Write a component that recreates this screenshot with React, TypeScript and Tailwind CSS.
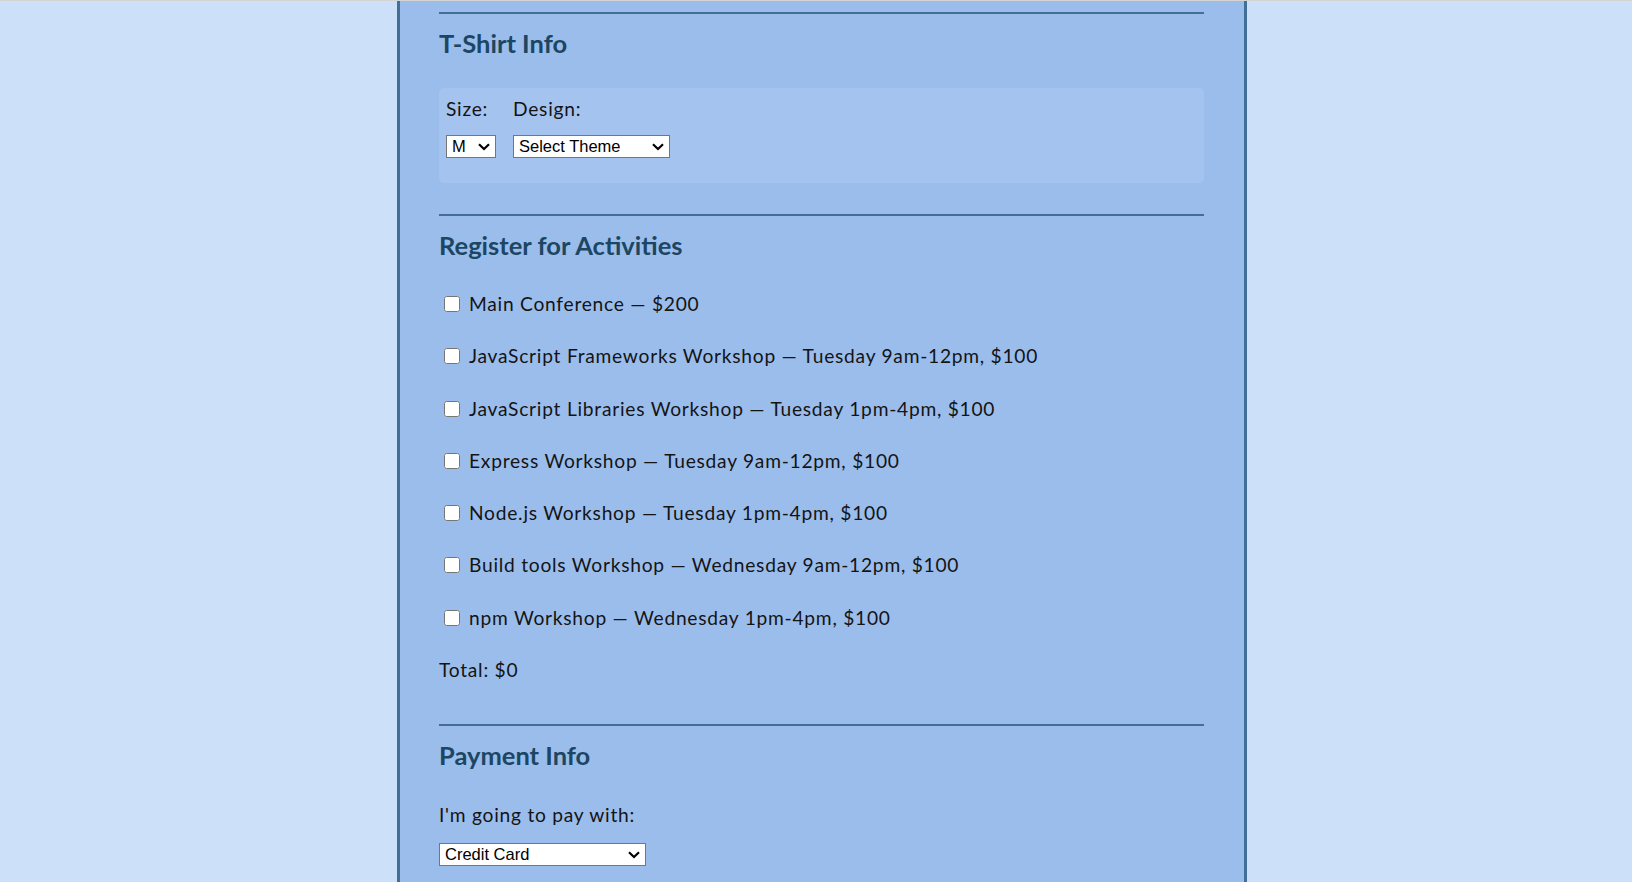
import { useState } from 'react';

const activities = [
  'Main Conference — $200',
  'JavaScript Frameworks Workshop — Tuesday 9am-12pm, $100',
  'JavaScript Libraries Workshop — Tuesday 1pm-4pm, $100',
  'Express Workshop — Tuesday 9am-12pm, $100',
  'Node.js Workshop — Tuesday 1pm-4pm, $100',
  'Build tools Workshop — Wednesday 9am-12pm, $100',
  'npm Workshop — Wednesday 1pm-4pm, $100',
];

function Chevron() {
  return (
    <svg width="12" height="8" viewBox="0 0 12 8" className="pointer-events-none absolute right-[6px] top-[8px]">
      <path d="M1 1.2 L6 6 L11 1.2" fill="none" stroke="#000" strokeWidth="2.2" />
    </svg>
  );
}

function Select({ value, options, width }: { value: string; options: string[]; width: string }) {
  return (
    <div className={`relative ${width}`}>
      <select
        defaultValue={value}
        className="block h-[23px] w-full appearance-none rounded-none border border-[#767676] bg-white pl-[5px] text-[16.5px] leading-[21px] tracking-normal text-black"
        style={{ fontFamily: '"Liberation Sans", Arial, sans-serif' }}
      >
        {options.map((o) => (
          <option key={o}>{o}</option>
        ))}
      </select>
      <Chevron />
    </div>
  );
}

export default function App() {
  const [checked, setChecked] = useState<boolean[]>(activities.map(() => false));

  const total = checked.reduce((sum, c, i) => sum + (c ? (i === 0 ? 200 : 100) : 0), 0);

  return (
    <div
      className="min-h-screen border-t border-[#d4d4d4] bg-[#cde0fa] pl-[12px] text-[19.2px] tracking-[0.75px] text-[#141414]"
      style={{ fontFamily: 'Lato, "Noto Sans", sans-serif' }}
    >
      <main className="mx-auto min-h-[881px] w-[850px] border-x-[3px] border-[#426f96] bg-[#9bbdec] pl-[39px] pr-[40px] pt-[11px]">
        {/* T-Shirt */}
        <section className="border-t-2 border-[#426f96]">
          <h2 className="mt-[13px] text-[25.5px] leading-[32px] font-bold tracking-normal text-[#1c4662]">T-Shirt Info</h2>
          <div className="mt-[29px] flex h-[95px] gap-[17px] rounded-[5px] bg-[#a4c4ef] px-[7px] pt-[8px]">
            <div>
              <label className="block leading-[26px]">Size:</label>
              <div className="mt-[13px]">
                <Select value="M" options={['S', 'M', 'L', 'XL']} width="w-[50px]" />
              </div>
            </div>
            <div>
              <label className="block leading-[26px]">Design:</label>
              <div className="mt-[13px]">
                <Select
                  value="Select Theme"
                  options={['Select Theme', 'Theme - JS Puns', 'Theme - I ♥ JS']}
                  width="w-[157px]"
                />
              </div>
            </div>
          </div>
        </section>

        {/* Activities */}
        <section className="mt-[31px] border-t-2 border-[#426f96]">
          <h2 className="mt-[13px] text-[25.5px] leading-[32px] font-bold tracking-normal text-[#1c4662]">Register for Activities</h2>
          <div className="mt-[31px]">
            {activities.map((a, i) => (
              <label key={a} className="flex h-[52.3px] items-start gap-[9px] pl-[5px]">
                <input
                  type="checkbox"
                  checked={checked[i]}
                  onChange={() => setChecked((prev) => prev.map((c, j) => (j === i ? !c : c)))}
                  className="mt-[4px] h-4 w-4 shrink-0"
                />
                <span className="leading-[24px]">{a}</span>
              </label>
            ))}
          </div>
          <p className="leading-[24px]">Total: ${total}</p>
        </section>

        {/* Payment */}
        <section className="mt-[42px] border-t-2 border-[#426f96]">
          <h2 className="mt-[13px] text-[25.5px] leading-[32px] font-bold tracking-normal text-[#1c4662]">Payment Info</h2>
          <p className="mt-[32px] leading-[24px]">I'm going to pay with:</p>
          <div className="mt-[16px]">
            <Select value="Credit Card" options={['Select Payment Method', 'Credit Card', 'PayPal', 'Bitcoin']} width="w-[207px]" />
          </div>
        </section>
      </main>
    </div>
  );
}
